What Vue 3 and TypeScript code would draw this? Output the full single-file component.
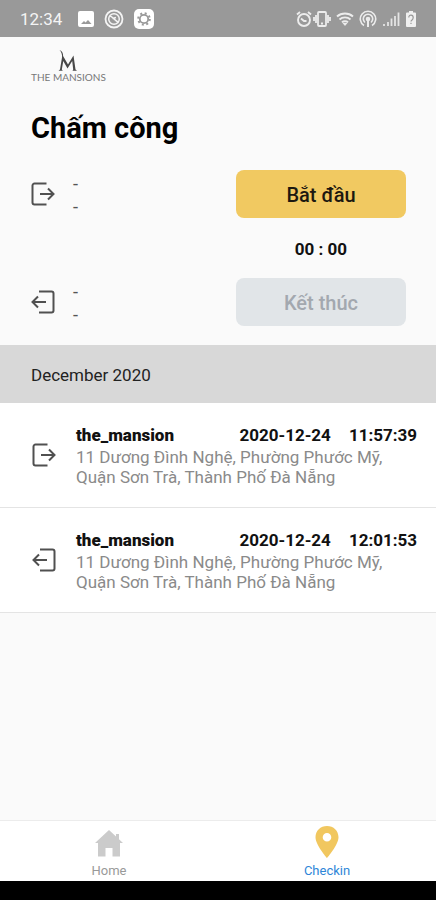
<script setup lang="ts">
import { ref } from 'vue'

type Direction = 'in' | 'out'

interface Entry {
  id: number
  direction: Direction
  place: string
  date: string
  time: string
  address: string
}

const timer = ref('00 : 00')
const entries = ref<Entry[]>([
  {
    id: 1,
    direction: 'in',
    place: 'the_mansion',
    date: '2020-12-24',
    time: '11:57:39',
    address: '11 Dương Đình Nghệ, Phường Phước Mỹ, Quận Sơn Trà, Thành Phố Đà Nẵng',
  },
  {
    id: 2,
    direction: 'out',
    place: 'the_mansion',
    date: '2020-12-24',
    time: '12:01:53',
    address: '11 Dương Đình Nghệ, Phường Phước Mỹ, Quận Sơn Trà, Thành Phố Đà Nẵng',
  },
])

const arrows: Record<Direction, string> = {
  in: 'M15.5 1.5H3.500a2 2 0 0 0-2 2v17a2 2 0 0 0 2 2h12M9 12h13M17 6.5l5.5 5.5-5.5 5.5',
  out: 'M8 1.500h12.500a2 2 0 0 1 2 2v17a2 2 0 0 1-2 2H8M15 12H2M7 6.5L1.5 12 7 17.5',
}
</script>

<template>
  <div class="screen">
    <div class="status">
      <span class="clock">12:34</span>
      <div class="group left">
        <svg width="16" height="16" viewBox="1 1 16 16">
          <path fill="#fff" fill-rule="evenodd" d="M3 1h12a2 2 0 0 1 2 2v12a2 2 0 0 1-2 2H3a2 2 0 0 1-2-2V3a2 2 0 0 1 2-2zM4 14h10.500l-3.500-4-2.500 2.500L7 11z" />
        </svg>
        <svg width="20" height="20" viewBox="0 0 20 20" fill="none" stroke="#f4f4f4">
          <circle cx="10" cy="10" r="8.500" stroke-width="1.800" />
          <circle cx="10" cy="10" r="5.300" stroke-width="1.500" />
          <path stroke-width="1.700" d="M5.500 7c3 0 4 3.500 9 6.500M8.500 9.500l3.500-1" />
        </svg>
        <svg width="20" height="20" viewBox="0 0 20 20">
          <rect width="20" height="20" rx="5" fill="#fff" />
          <circle cx="10" cy="10" r="5.800" fill="none" stroke="#999" stroke-width="2" stroke-dasharray="2 2.555" />
          <circle cx="10" cy="10" r="4.200" fill="none" stroke="#999" stroke-width="1.800" />
        </svg>
      </div>
      <div class="group right">
        <div class="group pair">
          <svg width="16" height="18" viewBox="0 0 16 18" fill="none" stroke="#ececec" stroke-width="1.900">
            <circle cx="8" cy="10" r="6" />
            <path d="M1 4.500L4 2M15 4.500L12 2M5 8.500l3 2.500h2.500" />
          </svg>
          <svg width="18" height="18" viewBox="0 0 18 18" fill="none" stroke="#ececec" stroke-width="1.800">
            <rect x="5" y="2" width="8" height="14" rx="1" />
            <path d="M3 5v8M15 5v8M1 7v4M17 7v4M8 13.500h2" />
          </svg>
        </div>
        <svg width="18" height="18" viewBox="0 0 18 18" fill="none" stroke="#ececec" stroke-width="1.900">
          <path d="M1 6.500c4.500-4 11.500-4 16 0M3.500 9.500c3-2.800 8-2.800 11 0M6 12.300c1.500-1.500 4.500-1.500 6 0" />
          <path fill="#ececec" stroke="none" d="M6.500 13h5L9 16z" />
        </svg>
        <svg width="18" height="18" viewBox="0 0 18 18" fill="none" stroke="#ececec" stroke-width="1.600">
          <path d="M5 15.500a7.700 7.700 0 1 1 8 0M6 12.500a4.700 4.700 0 1 1 6 0" />
          <circle cx="9" cy="9" r="1.500" fill="#ececec" />
          <path stroke-width="2" d="M9 10v7" />
        </svg>
        <svg width="18" height="18" viewBox="0 0 18 18" fill="none" stroke="#e4e4e4" stroke-width="1.800">
          <path d="M2 16v-2M6 16v-4M9.500 16V8.500M13 16V6M16.500 16V2.500" />
        </svg>
        <svg width="12" height="18" viewBox="0 0 12 18">
          <path fill="#f0f0f0" d="M4 1h4v1.500h2a1 1 0 0 1 1 1V16a1 1 0 0 1-1 1H2a1 1 0 0 1-1-1V3.500a1 1 0 0 1 1-1h2z" />
          <path fill="none" stroke="#999" stroke-width="1.200" d="M3.800 7.500c0-3.500 4.400-3 4.400 0S6 10 6 11.500M6 12.800V14" />
        </svg>
      </div>
    </div>

    <main class="body">
      <header class="top">
        <div class="logo">
          <svg width="20" height="22" viewBox="0 0 20 22" aria-hidden="true">
            <path fill="#484848" d="M1.500 0c2.800 1.200 3.800 3.500 3.600 6L10 14.500 15.500 5.500l2 14 1.500 1.300h-4.500l.7-1.300-1-8.500L9.500 18.500 5.300 11 3.800 19.500l1 1.300H.5L2 19.500 4 7.500C4.300 4.500 3.500 2 1.500 0z" />
          </svg>
          <span class="brand">THE MANSIONS</span>
        </div>
        <h1>Chấm công</h1>

        <section class="clocking">
          <div class="slot">
            <svg class="door" viewBox="0 0 24 24"><path :d="arrows.in" /></svg>
            <div class="values"><span>-</span><span>-</span></div>
            <button class="action start" type="button">Bắt đầu</button>
          </div>
          <div class="timer">{{ timer }}</div>
          <div class="slot">
            <svg class="door" viewBox="0 0 24 24"><path :d="arrows.out" /></svg>
            <div class="values"><span>-</span><span>-</span></div>
            <button class="action" type="button" disabled>Kết thúc</button>
          </div>
        </section>
      </header>

      <h2>December 2020</h2>
      <ul class="entries">
        <li v-for="entry in entries" :key="entry.id">
          <svg class="door" viewBox="0 0 24 24"><path :d="arrows[entry.direction]" /></svg>
          <div class="detail">
            <div class="line">
              <strong>{{ entry.place }}</strong>
              <time>{{ entry.date }}</time>
              <time>{{ entry.time }}</time>
            </div>
            <p>{{ entry.address }}</p>
          </div>
        </li>
      </ul>
    </main>

    <nav class="tabs">
      <a href="#home">
        <svg width="32" height="34" viewBox="0 0 32 34"><path fill="#cbcbcb" d="M16 5L2 18h3v13.500h7.500V23h7v8.500H27V18h3l-4-3.700V9h-3v2.500z" /></svg>
        <span>Home</span>
      </a>
      <a class="active" href="#checkin" aria-current="page">
        <svg width="32" height="34" viewBox="0 0 32 34"><path fill="#f1c75f" fill-rule="evenodd" d="M16 1C9.500 1 4.500 5.800 4.500 12.200 4.500 20 16 33 16 33s11.500-13 11.500-20.800C27.500 5.800 22.500 1 16 1zm0 7a4.300 4.300 0 1 1 0 8.600A4.300 4.300 0 0 1 16 8z" /></svg>
        <span>Checkin</span>
      </a>
    </nav>
    <div class="system"></div>
  </div>
</template>

<style>
body {
  margin: 0;
  background: #fafafa;
}
</style>

<style scoped>
.screen {
  display: flex;
  flex-direction: column;
  min-height: 100vh;
  background: #fafafa;
  color: #111;
  font-family: Roboto, 'Noto Sans', sans-serif;
}
svg {
  display: block;
  flex: none;
}
.status {
  display: flex;
  align-items: center;
  height: 37px;
  box-sizing: border-box;
  padding: 0 19px 0 20px;
  background: #999;
  color: #f4f4f4;
}
.clock {
  font-size: 17px;
  line-height: 20px;
}
.group {
  display: flex;
  align-items: center;
}
.left {
  gap: 10px;
  margin-left: 16px;
}
.right {
  gap: 5px;
  margin-left: auto;
}
.pair {
  gap: 1px;
}
.body {
  flex: 1;
}
.top {
  padding: 13px 30px 19px 31px;
}
.logo {
  display: inline-flex;
  flex-direction: column;
  align-items: center;
}
.brand {
  color: #777;
  font-family: Lato, sans-serif;
  font-size: 10px;
  line-height: 10px;
}
h1 {
  margin: 28px 0 24px;
  font-size: 29px;
  font-weight: 700;
  line-height: 36px;
  color: #000;
}
.slot {
  display: flex;
  align-items: center;
}
.door {
  width: 24px;
  height: 24px;
  fill: none;
  stroke: #505050;
  stroke-width: 2;
}
.values {
  display: flex;
  flex: 1;
  flex-direction: column;
  padding-top: 2px;
  margin-left: 18px;
  font-size: 18px;
  line-height: 23px;
  color: #555;
}
.action {
  width: 170px;
  height: 48px;
  padding: 2px 0 0;
  border: 0;
  border-radius: 8px;
  background: #e1e5e8;
  color: #a3a8af;
  font: 500 20px/24px Roboto, 'Noto Sans', sans-serif;
}
.start {
  background: #f1c961;
  color: #1c1810;
}
.timer {
  width: 170px;
  margin-left: auto;
  padding: 21px 0 19px;
  text-align: center;
  font-size: 17px;
  font-weight: 700;
  line-height: 20px;
}
h2 {
  margin: 0;
  padding: 18px 31px 16px;
  background: #d8d8d8;
  font-size: 17px;
  font-weight: 400;
  line-height: 24px;
  color: #222;
}
.entries {
  margin: 0;
  padding: 0;
  list-style: none;
}
li {
  display: flex;
  align-items: center;
  gap: 20px;
  padding: 20px 19px;
  padding-left: 32px;
  border-bottom: 1px solid #e4e4e4;
  background: #fff;
}
.detail {
  flex: 1;
}
.line {
  display: flex;
  gap: 18px;
  font-size: 17px;
  font-weight: 700;
  line-height: 24px;
}
.line strong {
  flex: 1;
}
p {
  margin: 0;
  font-size: 17px;
  line-height: 20px;
  color: #8a8a8a;
}
.tabs {
  display: grid;
  grid-template-columns: 1fr 1fr;
  border-top: 1px solid #ececec;
  background: #fff;
}
.tabs a {
  display: flex;
  flex-direction: column;
  align-items: center;
  gap: 3px;
  padding: 4px 0 1px;
  color: #999;
  font-size: 13px;
  line-height: 18px;
  text-decoration: none;
}
.tabs .active {
  color: #2e86d8;
}
.system {
  height: 19px;
  background: #000;
}
</style>
